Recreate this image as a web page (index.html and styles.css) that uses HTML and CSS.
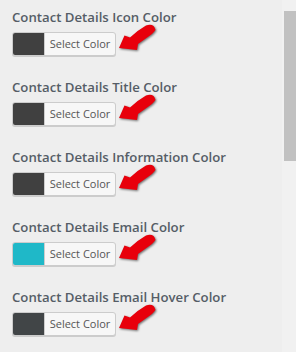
FILE: index.html
```html
<!DOCTYPE html>
<html lang="en">
<head>
  <meta charset="UTF-8">
  <meta name="viewport" content="width=device-width, initial-scale=1.0">
  <title>Contact Details Colors</title>
  <link rel="stylesheet" href="styles.css">
</head>
<body>

  <div id="options">

    <div class="option">
      <div class="option-label">Contact Details Icon Color</div>
      <div class="option-row">
        <button class="color-btn"><span class="swatch swatch-dark"></span><span class="btn-text">Select Color</span></button>
        <svg class="arrow" width="42" height="30" viewBox="0 0 42 30"><path d="M2,25 L7.5,12.5 L13,14.5 Q21,7 29,2.5 Q37,0 38.5,7 Q37,9 35,11 Q28,16 21,21 L20,27 Z"/></svg>
      </div>
    </div>

    <div class="option">
      <div class="option-label">Contact Details Title Color</div>
      <div class="option-row">
        <button class="color-btn"><span class="swatch swatch-dark"></span><span class="btn-text">Select Color</span></button>
        <svg class="arrow" width="42" height="30" viewBox="0 0 42 30"><path d="M2,25 L7.5,12.5 L13,14.5 Q21,7 29,2.5 Q37,0 38.5,7 Q37,9 35,11 Q28,16 21,21 L20,27 Z"/></svg>
      </div>
    </div>

    <div class="option">
      <div class="option-label">Contact Details Information Color</div>
      <div class="option-row">
        <button class="color-btn"><span class="swatch swatch-dark"></span><span class="btn-text">Select Color</span></button>
        <svg class="arrow" width="42" height="30" viewBox="0 0 42 30"><path d="M2,25 L7.5,12.5 L13,14.5 Q21,7 29,2.5 Q37,0 38.5,7 Q37,9 35,11 Q28,16 21,21 L20,27 Z"/></svg>
      </div>
    </div>

    <div class="option">
      <div class="option-label">Contact Details Email Color</div>
      <div class="option-row">
        <button class="color-btn"><span class="swatch swatch-teal"></span><span class="btn-text">Select Color</span></button>
        <svg class="arrow" width="42" height="30" viewBox="0 0 42 30"><path d="M2,25 L7.5,12.5 L13,14.5 Q21,7 29,2.5 Q37,0 38.5,7 Q37,9 35,11 Q28,16 21,21 L20,27 Z"/></svg>
      </div>
    </div>

    <div class="option">
      <div class="option-label">Contact Details Email Hover Color</div>
      <div class="option-row">
        <button class="color-btn"><span class="swatch swatch-slate"></span><span class="btn-text">Select Color</span></button>
        <svg class="arrow" width="42" height="30" viewBox="0 0 42 30"><path d="M2,25 L7.5,12.5 L13,14.5 Q21,7 29,2.5 Q37,0 38.5,7 Q37,9 35,11 Q28,16 21,21 L20,27 Z"/></svg>
      </div>
    </div>

  </div>

  <!-- fausse barre de défilement -->
  <div id="scrollbar">
    <div id="thumb"></div>
  </div>

</body>
</html>
```

FILE: styles.css
```css
body {
  font-family: 'Open Sans', 'Noto Sans', sans-serif;
  margin: 0;
  padding: 0;
  display: flex;
  height: 352px;
  overflow: hidden;
  background: #eeeeee;
}

#options {
  flex: 1;
  padding: 8px 0 0 12px;
}

.option {
  height: 70px;
}

.option-label {
  font-size: 13.2px;
  font-weight: 600;
  color: #555d66;
  line-height: 18px;
}

.option-row {
  display: flex;
  align-items: flex-start;
  margin-top: 6px;
}

.color-btn {
  display: flex;
  align-items: stretch;
  height: 24px;
  width: 104px;
  padding: 0;
  border: 1px solid #cccccc;
  border-radius: 3px;
  background: #f7f7f7;
  box-shadow: 0 1px 0 #cccccc;
  overflow: hidden;
  font-family: inherit;
}

.swatch {
  width: 31px;
}

.swatch-dark {
  background: #404040;
}

.swatch-teal {
  background: #1fb8c8;
}

.swatch-slate {
  background: #414547;
}

.btn-text {
  flex: 1;
  border-left: 1px solid #cccccc;
  font-size: 11px;
  line-height: 22px;
  color: #555555;
  text-align: center;
}

.arrow {
  margin: -9px 0 0 1px;
  fill: #e8000b;
  filter: drop-shadow(1px 1px 1px rgba(0, 0, 0, 0.55));
}

#scrollbar {
  width: 14px;
  background: #f1f1f1;
  padding-top: 11px;
}

#thumb {
  width: 12px;
  height: 150px;
  margin-left: 2px;
  background: #c1c1c1;
}
```
